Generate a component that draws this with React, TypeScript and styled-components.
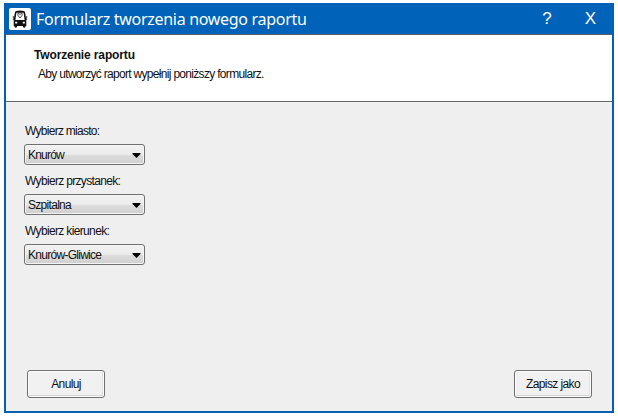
import React from "react";
import styled, { createGlobalStyle } from "styled-components";

const GlobalStyle = createGlobalStyle`
  * { box-sizing: border-box; }
  body { margin: 0; background: #fff; }
  button { font: inherit; color: inherit; }
`;

const Dialog = styled.main`
  display: flex;
  flex-direction: column;
  width: 610px;
  height: 410px;
  margin: 3px 0 0 4px;
  border: 2px solid #0660b0;
  border-top: 0;
  background: #efefef;
  color: #111;
  font-family: "Liberation Sans", Arial, sans-serif;
  font-size: 12px;
  line-height: 14px;
  white-space: nowrap;
`;

const TitleBar = styled.header`
  display: flex;
  align-items: center;
  height: 32px;
  flex: none;
  padding-left: 3px;
  background: #0062b8;
  border-bottom: 1px solid #566070;
  color: #fff;
`;

const AppIcon = styled.svg`
  width: 22px;
  height: 22px;
  margin-top: 1px;
  flex: none;
`;

const Title = styled.h1`
  flex: 1;
  margin: 0 0 0 5px;
  font: 400 16px/24px "Noto Sans", sans-serif;
  letter-spacing: -0.3px;
`;

const TitleButton = styled.button<{ $width: number }>`
  width: ${(p) => p.$width}px;
  height: 30px;
  padding: 0;
  border: 0;
  background: none;
  text-align: center;
  font: 400 17px/30px "Liberation Sans", sans-serif;
`;

const Intro = styled.section`
  height: 67px;
  flex: none;
  padding: 13px 0 0 28px;
  background: #fff;
  border-bottom: 1px solid #686868;
`;

const Heading = styled.h2`
  margin: 0;
  font-size: 12px;
  line-height: 14px;
  letter-spacing: -0.13px;
`;

const Description = styled.p`
  margin: 5px 0 0 4px;
  letter-spacing: -0.69px;
`;

const Form = styled.form`
  display: flex;
  flex: 1;
  flex-direction: column;
  justify-content: space-between;
  padding: 22px 20px 13px 18px;
`;

const Fields = styled.div`
  display: grid;
  gap: 9px;
`;

const Field = styled.div`
  display: grid;
  grid-template-rows: 20px 21px;
  width: 121px;
`;

const Label = styled.span<{ $spacing: number }>`
  padding-left: 1px;
  letter-spacing: ${(p) => p.$spacing}px;
`;

const Select = styled.button<{ $spacing: number }>`
  display: flex;
  align-items: center;
  justify-content: space-between;
  height: 21px;
  padding: 1px 3px 0;
  border: 1px solid #707070;
  border-radius: 3px;
  background: linear-gradient(#f2f2f2, #ebebeb 50%, #dddddd 52%, #cfcfcf);
  box-shadow: inset 0 0 0 1px #f4f4f4;
  letter-spacing: ${(p) => p.$spacing}px;
`;

const Actions = styled.footer`
  display: flex;
  justify-content: space-between;
  padding-left: 3px;
`;

const Action = styled.button<{ $spacing: number }>`
  width: 78px;
  height: 28px;
  padding: 0;
  border: 1px solid #707070;
  border-radius: 3px;
  background: #f1f1f1;
  box-shadow: inset 0 0 0 1px #fcfcfc, inset 0 -2px 0 #d5d5d5, inset -2px 0 0 #e3e3e3;
  letter-spacing: ${(p) => p.$spacing}px;
`;

const BusIcon = () => (
  <AppIcon viewBox="0 0 22 22" aria-hidden="true">
    <rect width="22" height="22" rx="2" fill="#fff" />
    <path
      fill="#111"
      fillRule="evenodd"
      d="M7 3Q11 2 15 3Q16 3.300 16.200 5L17.300 12V18H16.500V19Q15.300 20.500 14 19V18H8V19Q6.700 20.500 5.500 19V18H4.700V12L5.800 5Q6 3.300 7 3ZM7.400 4.800L6.400 12H15.600L14.600 4.800ZM6.200 13.800V15.500H8.200V13.800ZM13.800 13.800V15.500H15.800V13.800Z"
    />
    <path d="M4.300 8V12M17.700 8V12" fill="none" stroke="#111" strokeWidth=".8" />
    <path d="M9 5H13V7.500L11 10L9 7.500Z" fill="#fff" stroke="#333" strokeWidth=".9" />
    <path d="M10.300 6.700H11.700" fill="none" stroke="#333" strokeWidth=".8" />
  </AppIcon>
);

const Arrow = () => (
  <svg width="9" height="5" viewBox="0 0 9 5" aria-hidden="true">
    <path d="M0.500 0H8.500V1L4.500 5L0.500 1Z" fill="#000" />
  </svg>
);

const fields = [
  { label: "Wybierz miasto:", value: "Knurów", labelSpacing: -0.72, valueSpacing: -0.78 },
  { label: "Wybierz przystanek:", value: "Szpitalna", labelSpacing: -0.67, valueSpacing: -0.7 },
  { label: "Wybierz kierunek:", value: "Knurów-Gliwice", labelSpacing: -0.65, valueSpacing: -0.72 },
];

export default function App() {
  return (
    <>
      <GlobalStyle />
      <Dialog>
        <TitleBar>
          <BusIcon />
          <Title>Formularz tworzenia nowego raportu</Title>
          <TitleButton $width={44}>?</TitleButton>
          <TitleButton $width={43}>X</TitleButton>
        </TitleBar>
        <Intro>
          <Heading>Tworzenie raportu</Heading>
          <Description>Aby utworzyć raport wypełnij poniższy formularz.</Description>
        </Intro>
        <Form>
          <Fields>
            {fields.map((f) => (
              <Field key={f.label}>
                <Label $spacing={f.labelSpacing}>{f.label}</Label>
                <Select type="button" $spacing={f.valueSpacing}>
                  {f.value}
                  <Arrow />
                </Select>
              </Field>
            ))}
          </Fields>
          <Actions>
            <Action type="button" $spacing={-0.65}>Anuluj</Action>
            <Action type="button" $spacing={-0.6}>Zapisz jako</Action>
          </Actions>
        </Form>
      </Dialog>
    </>
  );
}
